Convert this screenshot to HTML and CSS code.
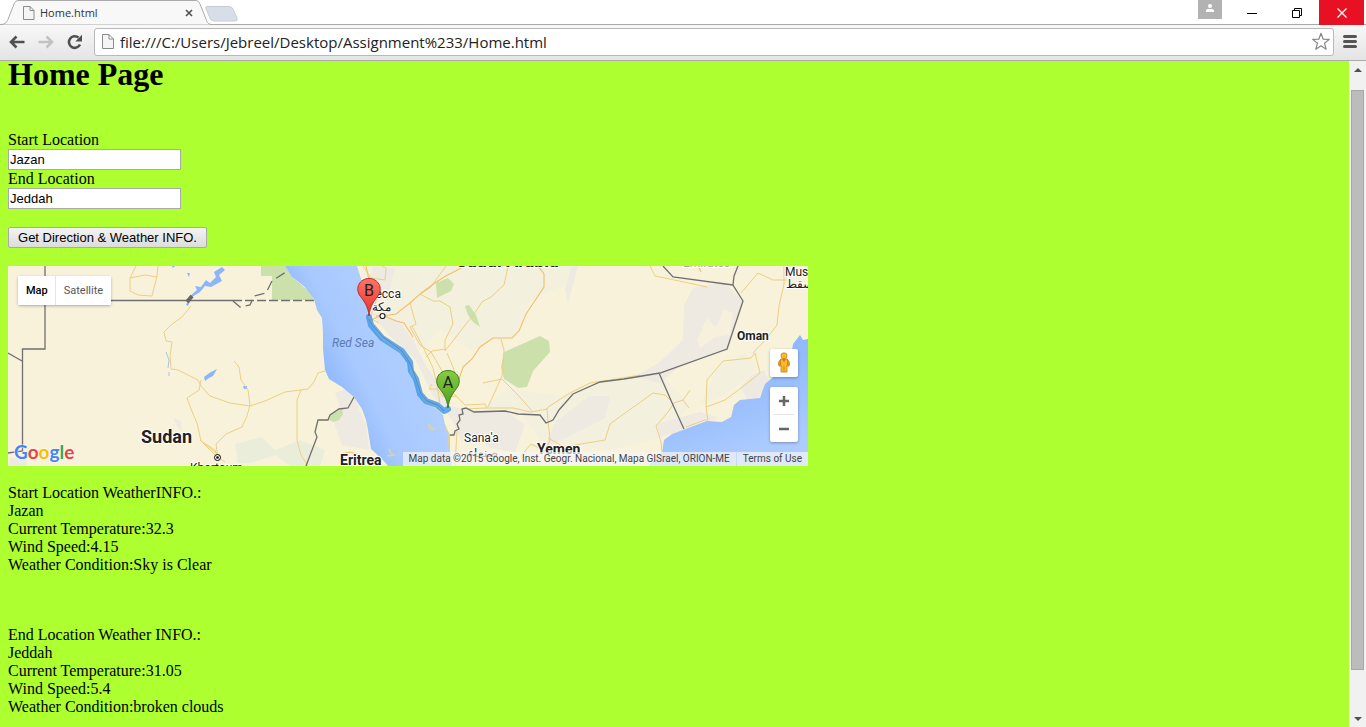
FILE: index.html
```html
<!DOCTYPE html>
<html lang="en">
<head>
<meta charset="utf-8">
<title>Home.html</title>
<link rel="stylesheet" href="styles.css">
</head>
<body>
<header class="titlebar">
  <div class="tab">
    <svg class="tab-shape" width="240" height="25" viewBox="0 0 240 25" aria-hidden="true">
      <path d="M0 24.500C6 24.500 7 22 8.500 18L14 4C15 1.500 16 .5 19 .5H195C198 .5 199 1.500 200 4L206 19C207.500 23 208 24.500 213 24.500" fill="#f8f8f8" stroke="#aaa"/>
      <path d="M207 6.500H229Q232 6.500 233 9L237 18Q238 21 235 21H214Q211 21 210 18L206 9Q205 6.500 207 6.500Z" fill="#d8dee7" stroke="#c8cdd4"/>
    </svg>
    <svg class="page-icon" width="12" height="14" viewBox="0 0 12 14" aria-hidden="true"><path d="M.5 .5H7L11 4.500V13.500H.5Z M7 .5V4.500H11" fill="#f5f5f5" stroke="#8a8a8a"/></svg>
    <span class="tab-title">Home.html</span>
    <button class="plain tab-close" aria-label="Close tab"><svg width="8" height="8" viewBox="0 0 8 8"><path d="M1 1L7 7M7 1L1 7" stroke="#555" stroke-width="1.700"/></svg></button>
  </div>
  <div class="window-controls">
    <button class="plain profile" aria-label="Profile"><svg width="24" height="19" viewBox="0 0 24 19"><circle cx="12" cy="6" r="2" fill="#fff"/><path d="M8 12V10.500Q8 9 10 9H14Q16 9 16 10.500V12Z" fill="#fff"/></svg></button>
    <button class="plain control" aria-label="Minimize"><svg width="12" height="12" viewBox="0 0 12 12"><path d="M1 6.500H11" stroke="#000"/></svg></button>
    <button class="plain control" aria-label="Restore"><svg width="12" height="12" viewBox="0 0 12 12"><path d="M1.500 3.500H8.500V10.500H1.500ZM3.500 3V1.500H10.500V8.500H9" fill="none" stroke="#000"/></svg></button>
    <button class="plain control close" aria-label="Close"><svg width="12" height="12" viewBox="0 0 12 12"><path d="M1.500 1.500L10.500 10.500M10.500 1.500L1.500 10.500" stroke="#fff" stroke-width="1.300"/></svg></button>
  </div>
</header>
<nav class="toolbar">
  <button class="plain nav" aria-label="Back"><svg width="18" height="16" viewBox="0 0 18 16"><path d="M16.500 8H4M8.500 2.500L3 8L8.500 13.500" fill="none" stroke="#505050" stroke-width="2.600"/></svg></button>
  <button class="plain nav" aria-label="Forward"><svg width="18" height="16" viewBox="0 0 18 16"><path d="M1.500 8H14M9.500 2.500L15 8L9.500 13.500" fill="none" stroke="#c2c2c2" stroke-width="2.600"/></svg></button>
  <button class="plain nav" aria-label="Reload"><svg width="18" height="16" viewBox="0 0 18 16"><path d="M14 10.500A5.800 5.800 0 1 1 12.500 3.600" fill="none" stroke="#505050" stroke-width="2.600"/><path d="M16 .8V7.500H9.300Z" fill="#505050"/></svg></button>
  <div class="omnibox">
    <svg class="page-icon" width="12" height="15" viewBox="0 0 12 15" aria-hidden="true"><path d="M.5 .5H7L11.500 5V14.500H.5Z M7 .5V5H11.500" fill="#f5f5f5" stroke="#8a8a8a"/></svg>
    <input class="url" type="text" aria-label="Address" value="file:///C:/Users/Jebreel/Desktop/Assignment%233/Home.html">
    <button class="plain star" aria-label="Bookmark"><svg width="20" height="19" viewBox="0 0 20 19"><path d="M10 1.300L12.200 7.200L18.300 7.400L13.500 11.200L15.200 17.200L10 13.800L4.800 17.200L6.500 11.200L1.700 7.400L7.800 7.200Z" fill="#fff" stroke="#858585" stroke-width="1.200" stroke-linejoin="round"/></svg></button>
  </div>
  <button class="plain menu" aria-label="Menu"><svg width="14" height="13" viewBox="0 0 14 13"><path d="M1.500 1.500H12.500M1.500 6.500H12.500M1.500 11.500H12.500" stroke="#555" stroke-width="3" stroke-linecap="round"/></svg></button>
</nav>
<div class="viewport">
  <main class="page">
    <h1>Home Page</h1>
    <form class="search">
      <label for="start">Start Location</label>
      <input class="field" id="start" type="text" value="Jazan">
      <label for="end">End Location</label>
      <input class="field" id="end" type="text" value="Jeddah">
      <button class="submit" type="button">Get Direction &amp; Weather INFO.</button>
    </form>
    <section class="map" aria-label="Map">
      <svg class="map-art" viewBox="8 266 800 200">
        <defs>
          <linearGradient id="sea" gradientUnits="userSpaceOnUse" x1="318" y1="372" x2="426" y2="320"><stop offset="0" stop-color="#8cb6fc"/><stop offset=".3" stop-color="#a8c9ff"/><stop offset=".75" stop-color="#b0ceff"/><stop offset="1" stop-color="#9cc1ff"/></linearGradient>
          <linearGradient id="gulf" x1="0" y1="0" x2=".4" y2="1"><stop offset="0" stop-color="#86b2fa"/><stop offset=".5" stop-color="#94bbfc"/><stop offset="1" stop-color="#accbff"/></linearGradient>
          <linearGradient id="red" x1="0" y1="0" x2="0" y2="1"><stop offset="0" stop-color="#ff7469"/><stop offset="1" stop-color="#e5312a"/></linearGradient>
          <linearGradient id="green" x1="0" y1="0" x2="0" y2="1"><stop offset="0" stop-color="#86cc40"/><stop offset="1" stop-color="#4c9f1c"/></linearGradient>
        </defs>
        <rect x="8" y="266" width="800" height="200" fill="#f8f2db"/>
        <g fill="#f4f0de">
          <path d="M362 266H575L565 285L530 300L515 335L470 350L440 330L420 350L400 330L372 315Z"/>
          <path d="M508 388L560 396L610 378L660 374L690 405L665 437L610 450L540 440L520 412L480 410Z"/>
          <path d="M720 365L745 353L757 365L748 378L715 400L700 405Z"/>
        </g>
        <g fill="#eee9e1">
          <path d="M694 287L725 283L742 300L728 350L680 366L660 383L635 377L660 362L683 340L684 305Z"/>
          <path d="M373 266L395 269L389 293L366 300Z"/>
          <path d="M370 312L398 320L413 340L424 362L437 383L450 406L466 410L480 428L462 442L452 420L432 394L416 360L390 336Z"/>
          <path d="M462 410H505L525 425L515 452L490 448L470 430Z"/>
          <path d="M555 422L590 396H610L605 418L570 436L545 448Z"/>
          <path d="M657 424L700 412L719 418L696 426L660 437Z"/>
          <path d="M748 400L740 388L752 375L764 370L770 382L758 398Z"/>
          <path d="M335 393L350 388L366 425L369 450L342 445L333 420L341 410Z"/>
          <path d="M10 458L27 460V466H8ZM173 418L181 421L182 432L178 428ZM572 266H578L568 303L565 290Z"/>
        </g>
        <path d="M697 340L707 318L716 327L724 309L733 313L730 335L715 337L700 348Z" fill="#f6f0dc"/>
        <path d="M235 444L262 437L275 450L300 440L325 450L320 466H290L276 455L250 463H238Z" fill="#ebeddb"/>
        <g fill="#cce0ac">
          <path d="M261 266H285L293 278L310 292L314 300H272V276H261Z"/>
          <path d="M436 283L448 278L454 284L451 291L437 298Z"/>
          <path d="M465 306L469 305L476 315L480 327L473 322L468 315Z"/>
          <path d="M504 352L540 336L549 341L550 352L533 371L527 387L518 388L504 379L501 367Z"/>
          <path d="M329 420L331 414L342 409L343 414L339 420L333 422Z"/>
        </g>
        <path d="M285 266L292 277L305 287L314 299L317 310L322 318L323 332L323 349L325 370L329 379L342 387L354 397L362 409L366 420L368 430L371 449L382 459L388 466H452L450 452V435L445 425L443 415L437 409L424 402L420 395L415 379L410 374L409 362L402 354L382 340L370 325L368 317L367 302L362 282L357 266Z" fill="url(#sea)"/>
        <path d="M648 466L662 452L664 440L672 434L683 430L707 421L722 422L731 417L734 405L740 400L760 398L765 384L772 378L790 364L793 344L800 335L803 340L808 339V466Z" fill="url(#gulf)"/>
        <g fill="#8bb6fb">
          <path d="M186 305L190 296L197 290L195 286L201 287L206 280L210 283L216 277L214 272L222 267L225 270L219 275L222 281L211 287L205 286L200 292L192 297L188 306Z"/>
          <path d="M204 377L208 374L211 372L217 369L213 376L209 378L205 381ZM187 273H190L189 277ZM172 266H175L173 268ZM243 386H247V389H244Z"/>
        </g>
        <path d="M166 352L169 360L168 368M169 372V376" fill="none" stroke="#a5c5ee"/>
        <path d="M389 449L391 454L395 455L387 456M428 424L431 430L435 429L430 426Z" fill="none" stroke="#d6d3a7" stroke-width="1.500"/>
        <g fill="none" stroke="#ebd083" stroke-linejoin="round">
          <path d="M136 266L130 278L130 291L138 295L152 296L157 276L158 266M130 278L145 275L157 277"/>
          <path d="M191 306L182 317L171 325L164 332L166 341L172 342L170 356L171 369L178 370L198 380L201 386L210 396L230 403L250 406L265 401L285 392L308 389L314 382L318 373L325 371"/>
          <path d="M201 380L199 390L187 398L191 409L197 423L201 441L215 450L218 458L216 444L226 434L242 427L247 416L250 405L248 390L241 380L239 367L234 361M200 440L217 457L225 462M301 390L297 400L297 440L301 455L308 466"/>
          <path d="M205 444L216 453"/>
          <path d="M363 266L371 278L385 280L386 268L382 266M369 277L380 290L370 318L379 323"/>
          <path d="M446 266L430 288L420 294M420 294L433 301H440L450 307L453 324L445 340V351L466 324L474 314L482 302L491 297L504 285L508 267M410 303L413 314L416 324L410 327L420 345L431 352L448 381L451 391L465 405L485 404L487 408M446 349L432 351L426 357M447 353L453 367L457 379M412 326L424 349L433 368L437 385L440 404"/>
          <path d="M501 339L504 350L502 376L488 407M466 409L485 408L513 408L531 412L547 409L548 407L570 393L590 383L610 380L640 375M483 383L502 379L517 394L532 411M547 408L548 421L550 440L545 451L531 444L520 457"/>
          <path d="M548 438L564 447L587 443L605 440L610 424L625 413L642 401L653 393L665 395L670 400M663 462L661 442L656 426L668 412L674 403L683 400L689 408M683 400L690 390M686 427L705 420L708 420L706 407L707 380L723 361L751 358L755 353L760 373L741 388L725 400L706 407M753 353L767 338L777 325L779 306L784 284V266M650 266L655 276L684 282L707 287M741 293L758 273L773 280L787 280"/>
          <path d="M432 384L429 389H438L443 397L457 396M445 425L449 436L446 466M457 431L455 466"/>
        </g>
        <g fill="none" stroke="#f3bd6c" stroke-width="1.100">
          <path d="M376 316L389 315L396 314L410 303L420 294L432 285L444 277L465 266M538 266L544 274V287L536 299L526 314L519 331L512 338L493 338L480 347L472 359L463 367L458 382M371 320L382 315L396 321L404 323L413 337M366 266L372 294"/>
          <path d="M341 454L350 452L360 455M698 266L701 272"/>
        </g>
        <g fill="none" stroke="#6f6f6f" stroke-width="1.300">
          <path d="M45 266V349H22.500V451L8 453M8 353L22 361M45 300.500H233"/>
          <path d="M233 300.500H315" stroke-dasharray="9 3"/>
          <path d="M233 301L240 307L250 305L254 296L266 293L272 281L286 272" stroke-dasharray="10 5"/>
          <path d="M354 397L348 408L339 409L330 415L328 420H318L315 432L317 437L306 466"/>
          <path d="M450 435H454L455 431L459 429L457 424L460 420L459 415L463 414L462 409L466 408L474 412L505 411L518 414L540 415L546 423L553 420L559 410L573 394L600 382L624 379L660 373L727 349L743 301L733 285L734 276L738 266M663 266L673 277L733 285M659 373L673 405L684 429"/>
        </g>
        <path d="M187 302L192 296" stroke="#666" stroke-width="4"/>
        <path d="M369 317L371 325L382 338L402 351L410 362L411 371L416 379L420 394L426 401L437 405L444 411L448 409" fill="none" stroke="#3391ec" stroke-opacity=".75" stroke-width="6" stroke-linejoin="round" stroke-linecap="round"/>
        <path d="M369 319L372 325L383 337L402 351L410 363L416 379L421 394L427 401L438 405L444 411" fill="none" stroke="#55778c" stroke-opacity=".6" stroke-width="1"/>
        <circle cx="382.500" cy="316" r="2.500" fill="#fff" stroke="#222" stroke-width="1.200"/>
        <circle cx="217.500" cy="457.500" r="3" fill="#fff" stroke="#000"/><circle cx="217.500" cy="457.500" r="1.300"/>
        <g class="map-label">
          <text class="country large" x="141" y="443">Sudan</text>
          <text class="country" x="340" y="465">Eritrea</text>
          <text class="country" x="537" y="454">Yemen</text>
          <text class="country small" x="737" y="340">Oman</text>
          <text class="country wide" x="456" y="267">Saudi Arabia</text>
          <text class="muted" x="683" y="267">Emirates</text>
          <text class="water" x="332" y="347">Red Sea</text>
          <text class="city" x="365" y="298">Mecca</text>
          <text class="city" x="372" y="311">مكة</text>
          <text class="city" x="464" y="442">Sana'a</text>
          <text class="city" x="468" y="457">صنعاء</text>
          <text class="city" x="785" y="276">Muscat</text>
          <text class="city" x="786" y="288">مسقط</text>
          <text class="city" x="190" y="472">Khartoum</text>
        </g>
        <path d="M369 316C368 306 364 301 360.500 296.500C354 288 360 278.500 369 278.500S384 288 377.500 296.500C374 301 370 306 369 316Z" fill="url(#red)" stroke="#b42d28"/>
        <path d="M448 408C447 398 443 393 439.500 388.500C433 380 439 370.500 448 370.500S463 380 456.500 388.500C453 393 449 398 448 408Z" fill="url(#green)" stroke="#397c19"/>
        <text class="pin" x="369" y="296">B</text>
        <text class="pin" x="448" y="388">A</text>
      </svg>
      <div class="map-types"><button class="type active">Map</button><button class="type">Satellite</button></div>
      <button class="map-button pegman" aria-label="Street View"><svg width="14" height="21" viewBox="0 0 14 21"><path d="M3.500 7.500Q1.500 9 1.500 13L3 14.500L4 10M10.500 7.500Q12.500 9 12.500 13L11 14.500L10 10" fill="#e99a16" stroke="#bd7412" stroke-width=".8"/><path d="M3.500 7H10.500V13H10V20H4V13H3.500Z" fill="#fbb829" stroke="#c8811a" stroke-width=".8"/><path d="M5 7L7 10L9 7Z" fill="#e46b1b"/><path d="M7 14V20" stroke="#d58a18"/><circle cx="7" cy="3.800" r="3" fill="#fbb829" stroke="#c8811a" stroke-width=".8"/></svg></button>
      <div class="zoom">
        <button class="zoom-button" aria-label="Zoom in"><svg width="12" height="12" viewBox="0 0 12 12"><path d="M1 6H11M6 1V11" stroke="#666" stroke-width="2.500"/></svg></button>
        <button class="zoom-button" aria-label="Zoom out"><svg width="12" height="12" viewBox="0 0 12 12"><path d="M1 6H11" stroke="#666" stroke-width="2.500"/></svg></button>
      </div>
      <a class="logo" href="#" aria-label="Google"><span class="blue">G</span><span class="red">o</span><span class="yellow">o</span><span class="blue">g</span><span class="green">l</span><span class="red">e</span></a>
      <div class="credits"><span class="credit">Map data ©2015 Google, Inst. Geogr. Nacional, Mapa GISrael, ORION-ME</span><a class="credit terms" href="#">Terms of Use</a></div>
    </section>
    <section class="report">
      <div>Start Location WeatherINFO.:</div>
      <div>Jazan</div>
      <div>Current Temperature:32.3</div>
      <div>Wind Speed:4.15</div>
      <div>Weather Condition:Sky is Clear</div>
    </section>
    <section class="report">
      <div>End Location Weather INFO.:</div>
      <div>Jeddah</div>
      <div>Current Temperature:31.05</div>
      <div>Wind Speed:5.4</div>
      <div>Weather Condition:broken clouds</div>
    </section>
  </main>
  <div class="scrollbar">
    <button class="plain arrow" aria-label="Scroll up"><svg width="8" height="4" viewBox="0 0 8 4"><path d="M0 4L4 0L8 4Z" fill="#505050"/></svg></button>
    <div class="track"><div class="thumb"></div></div>
    <button class="plain arrow" aria-label="Scroll down"><svg width="8" height="4" viewBox="0 0 8 4"><path d="M0 0L4 4L8 0Z" fill="#505050"/></svg></button>
  </div>
</div>
</body>
</html>
```
FILE: styles.css
```css
* { box-sizing: border-box; }
body {
  margin: 0;
  height: 100vh;
  display: flex;
  flex-direction: column;
  overflow: hidden;
  font: 16px/18px "Liberation Serif", serif;
  color: #000;
}
svg { display: block; }
button, input { font-family: inherit; }
.plain {
  display: flex;
  align-items: center;
  justify-content: center;
  padding: 0;
  border: 0;
  background: none;
}
.titlebar {
  display: flex;
  justify-content: space-between;
  height: 25px;
  flex: none;
  background: #fff;
  border-bottom: 1px solid #aaa;
}
.tab {
  position: relative;
  display: flex;
  align-items: center;
  width: 240px;
  height: 25px;
  padding-left: 23px;
  font: 11px/16px "Open Sans", sans-serif;
  color: #333;
}
.tab-shape { position: absolute; left: 0; top: 0; }
.page-icon { position: relative; flex: none; }
.tab-title { position: relative; width: 149px; padding-left: 5px; }
.tab-close { position: relative; width: 10px; height: 10px; }
.window-controls { display: flex; padding-right: 2px; }
.profile { width: 24px; height: 19px; background: #b2b2b2; margin-right: 7px; }
.control { width: 45px; height: 25px; }
.control.close { width: 45px; background: #e81123; }
.toolbar {
  display: flex;
  align-items: center;
  height: 36px;
  flex: none;
  padding: 0 9px 2px 7px;
  background: linear-gradient(#f8f8f8, #e4e4e4);
  border-bottom: 1px solid #aaa;
}
.nav { width: 19px; height: 24px; margin-right: 10px; }
.omnibox {
  display: flex;
  align-items: center;
  flex: 1;
  height: 28px;
  padding: 0 2px 0 7px;
  background: #fff;
  border: 1px solid #b8b8b8;
  border-radius: 3px;
}
.url {
  flex: 1;
  min-width: 0;
  border: 0;
  padding: 0 6px;
  background: none;
  font: 15px/20px "Open Sans", sans-serif;
  color: #222;
}
.menu { width: 14px; height: 24px; margin-left: 9px; }
.viewport { flex: 1; min-height: 0; display: flex; }
.page {
  flex: 1;
  min-width: 0;
  overflow: hidden;
  padding: 0 8px;
  background: #adff2f;
}
/* The page is scrolled a little way past its top edge. */
h1 { margin: -5px 0 38px; font-size: 32px; line-height: 37px; }
.search { display: flex; flex-direction: column; align-items: flex-start; margin-bottom: 18px; }
.field {
  width: 173px;
  height: 21px;
  padding: 1px;
  border: 1px solid #a9a9a9;
  background: #fff;
  font: 13px/16px "Liberation Sans", Arial, sans-serif;
  color: #000;
}
.submit {
  min-width: 199px;
  height: 21px;
  margin-top: 18px;
  padding: 0 7px;
  border: 1px solid #a9a9a9;
  border-radius: 2px;
  background: linear-gradient(#f4f4f4, #dcdcdc);
  font: 13px/16px "Liberation Sans", Arial, sans-serif;
  color: #000;
}
.map {
  position: relative;
  width: 800px;
  max-width: 100%;
  overflow: hidden;
  font-family: Roboto, sans-serif;
}
.map-art { width: 100%; height: auto; }
.map-label { paint-order: stroke; stroke: #fff; stroke-width: 2px; stroke-linejoin: round; fill: #222; }
.country { font-size: 14px; font-weight: 700; }
.country.large { font-size: 18px; }
.country.small { font-size: 12px; }
.country.wide { font-size: 18px; }
.city { font-size: 12px; }
.muted { font-size: 12px; fill: #aaa; }
.water { font-size: 12px; font-style: italic; fill: #5b7db5; stroke: none; }
.pin { font-size: 16px; text-anchor: middle; fill: #222; }
.map-types {
  position: absolute;
  left: 10px;
  top: 10px;
  display: flex;
  border-radius: 2px;
  box-shadow: 0 1px 3px rgba(0, 0, 0, .3);
}
.type {
  height: 29px;
  padding: 0 8px;
  border: 0;
  background: #fff;
  font-size: 11px;
  color: #565656;
}
.type.active { padding-right: 7px; border-right: 1px solid #e5e5e5; font-weight: 500; color: #000; }
.map-button, .zoom {
  position: absolute;
  right: 10px;
  width: 28px;
  border: 0;
  border-radius: 2px;
  background: #fff;
  box-shadow: 0 1px 3px rgba(0, 0, 0, .3);
}
.pegman { display: flex; align-items: center; justify-content: center; top: 83px; height: 28px; padding: 0 0 2px; }
.zoom { top: 121px; padding: 0 4px; }
.zoom-button {
  display: flex;
  align-items: center;
  justify-content: center;
  width: 20px;
  height: 27px;
  padding: 0;
  border: 0;
  background: none;
}
.zoom-button + .zoom-button { height: 28px; border-top: 1px solid #e5e5e5; }
.logo {
  position: absolute;
  left: 6px;
  bottom: 2px;
  font: 700 19px/24px Lato, sans-serif;
  text-decoration: none;
  text-shadow: 0 0 1px #fff, 0 0 2px #fff;
}
.blue { color: #4285f4; }
.red { color: #ea4335; }
.yellow { color: #fbbc05; }
.green { color: #34a853; }
.credits {
  position: absolute;
  right: 0;
  bottom: 0;
  display: flex;
  font-size: 10px;
  line-height: 14px;
  color: #444;
}
.credit { padding: 0 6px; background: rgba(245, 245, 245, .7); }
.terms { border-left: 1px solid #c5d8f5; color: #444; text-decoration: none; }
.report { margin: 18px 0 52px; }
.scrollbar { width: 17px; flex: none; display: flex; flex-direction: column; background: #f1f1f1; }
.arrow { width: 17px; height: 17px; }
.track { flex: 1; padding: 12px 2px 0; }
.thumb { height: 93.5%; background: #bcbcbc; border: 1px solid #a8a8a8; }
```
